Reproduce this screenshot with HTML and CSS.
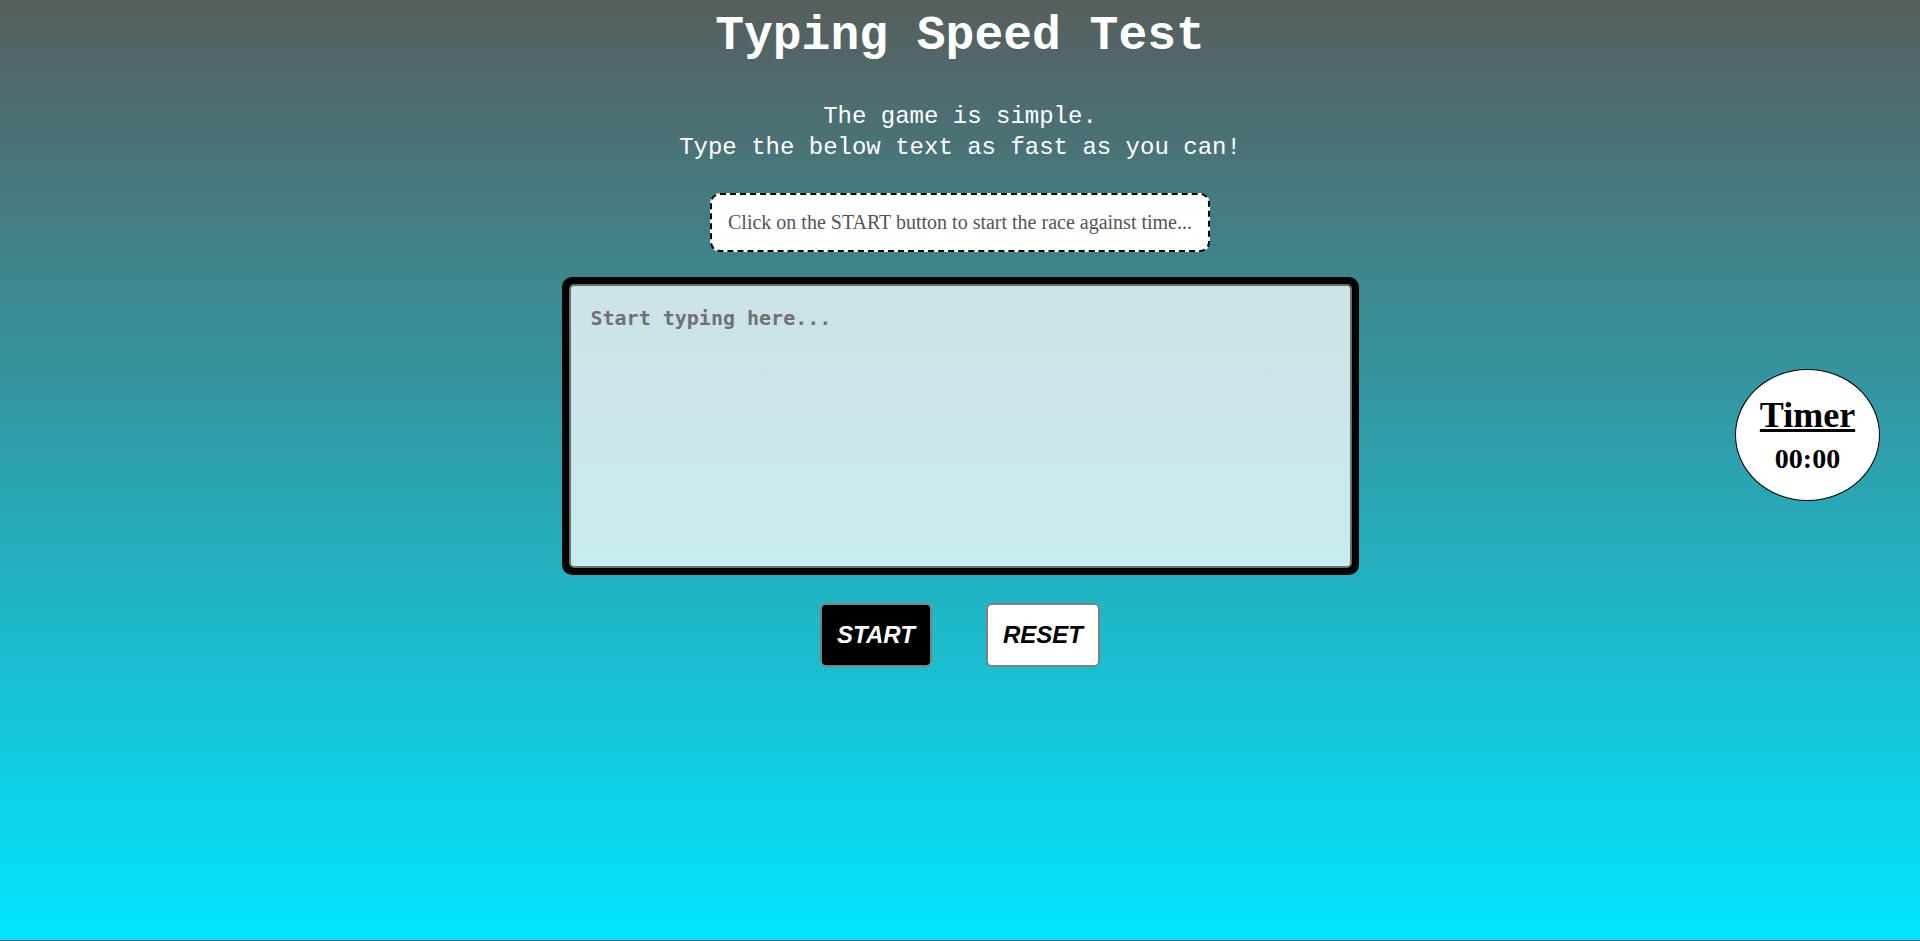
FILE: index.html
```html
<!DOCTYPE html>
<html lang="en">
<head>
<meta charset="utf-8">
<title>Typing Speed Test</title>
<link rel="stylesheet" href="styles.css">
</head>
<body>
  <main class="page">
    <h1 class="title">Typing Speed Test</h1>
    <p class="intro">The game is simple.<br>Type the below text as fast as you can!</p>
    <div class="quote">Click on the START button to start the race against time...</div>
    <div class="area-wrap">
      <textarea class="area" placeholder="Start typing here..."></textarea>
    </div>
    <div class="buttons">
      <button class="btn btn-start">START</button>
      <button class="btn btn-reset">RESET</button>
    </div>
  </main>
  <div class="timer">
    <div class="timer-label">Timer</div>
    <div class="timer-value">00:00</div>
  </div>
</body>
</html>
```
FILE: styles.css
```css
html {
  background: linear-gradient(to bottom, #575e5e, #00e6ff);
  background-size: 100% 940px;
  background-repeat: repeat-y;
  min-height: 100%;
}
body {
  margin: 0;
  min-height: 940px;
}
.page {
  display: flex;
  flex-direction: column;
  align-items: center;
  padding-top: 9px;
}
.title {
  margin: 0;
  font-family: "Liberation Mono", monospace;
  font-weight: bold;
  font-size: 48px;
  line-height: normal;
  color: #ffffff;
}
.intro {
  margin: 38px 0 0;
  font-family: "Liberation Mono", monospace;
  font-size: 24px;
  line-height: 31px;
  color: #ffffff;
  text-align: center;
}
.quote {
  margin-top: 30px;
  width: 500px;
  box-sizing: border-box;
  padding: 16px 16px;
  background: #ffffff;
  border: 2px dashed #000000;
  border-radius: 10px;
  font-family: "Liberation Serif", serif;
  font-size: 20px;
  line-height: normal;
  color: #555555;
  text-align: center;
  white-space: nowrap;
}
.area-wrap {
  margin-top: 25px;
  width: 797px;
  height: 298px;
  box-sizing: border-box;
  border: 7px solid #000000;
  border-radius: 10px;
  background: #000000;
}
.area {
  display: block;
  width: 100%;
  height: 100%;
  box-sizing: border-box;
  margin: 0;
  padding: 20px;
  border: 2px solid #667072;
  border-radius: 5px;
  background: linear-gradient(to bottom, #cde2e4, #c8ecef);
  font-family: "DejaVu Sans Mono", monospace;
  font-weight: bold;
  font-size: 20px;
  resize: none;
  outline: none;
}
.area::placeholder {
  color: #707070;
  opacity: 1;
}
.buttons {
  margin-top: 28px;
  display: flex;
  gap: 54px;
}
.btn {
  height: 64px;
  padding: 0 15px;
  border: 2px solid #808080;
  border-radius: 6px;
  font-family: "Liberation Sans", Arial, sans-serif;
  font-style: italic;
  font-weight: bold;
  font-size: 24px;
}
.btn-start {
  background: #000000;
  color: #ffffff;
}
.btn-reset {
  background: #ffffff;
  color: #000000;
}
.timer {
  position: absolute;
  top: 369px;
  right: 40px;
  width: 145px;
  height: 132px;
  box-sizing: border-box;
  border: 1px solid #000000;
  border-radius: 50%;
  background: #ffffff;
  display: flex;
  flex-direction: column;
  align-items: center;
  padding-top: 24px;
  gap: 7px;
  font-family: "Liberation Serif", serif;
  font-weight: bold;
  color: #000000;
}
.timer-label {
  font-size: 36px;
  text-decoration: underline;
  line-height: normal;
}
.timer-value {
  font-size: 28px;
  line-height: normal;
}
```
